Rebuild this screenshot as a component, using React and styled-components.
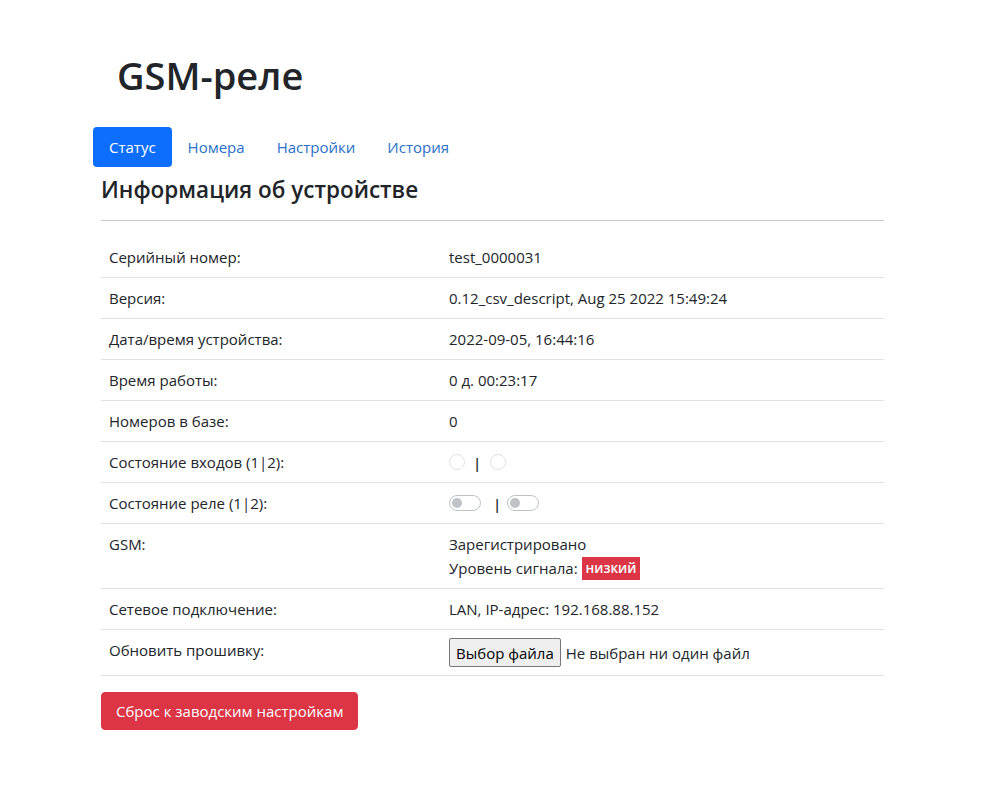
import styled, { createGlobalStyle } from "styled-components";

const GlobalStyle = createGlobalStyle`
  body {
    margin: 0;
    background: #fff;
    color: #212529;
    font-family: "Open Sans", "Noto Sans", sans-serif;
    font-size: 15px;
    line-height: 24px;
  }
  * { box-sizing: border-box; }
`;

const rows = [
  ["Серийный номер:", "test_0000031"],
  ["Версия:", "0.12_csv_descript, Aug 25 2022 15:49:24"],
  ["Дата/время устройства:", "2022-09-05, 16:44:16"],
  ["Время работы:", "0 д. 00:23:17"],
  ["Номеров в базе:", "0"],
];

const App = () => {
  return (
    <Page>
      <GlobalStyle />
      <Title>GSM-реле</Title>
      <Nav>
        <NavLink $active>Статус</NavLink>
        <NavLink>Номера</NavLink>
        <NavLink>Настройки</NavLink>
        <NavLink>История</NavLink>
      </Nav>
      <Content>
        <SectionTitle>Информация об устройстве</SectionTitle>
        <Rule />
        <Table>
          <tbody>
            {rows.map(([k, v]) => (
              <tr key={k}>
                <Cell>{k}</Cell>
                <Cell>{v}</Cell>
              </tr>
            ))}
            <tr>
              <Cell>Состояние входов (1|2):</Cell>
              <Cell>
                <Inline>
                  <Radio />
                  <Sep>|</Sep>
                  <Radio />
                </Inline>
              </Cell>
            </tr>
            <tr>
              <Cell>Состояние реле (1|2):</Cell>
              <Cell>
                <Inline>
                  <Switch />
                  <Sep $wide>|</Sep>
                  <Switch />
                </Inline>
              </Cell>
            </tr>
            <tr>
              <Cell>GSM:</Cell>
              <Cell>
                Зарегистрировано
                <br />
                Уровень сигнала: <Badge>низкий</Badge>
              </Cell>
            </tr>
            <tr>
              <Cell>Сетевое подключение:</Cell>
              <Cell>LAN, IP-адрес: 192.168.88.152</Cell>
            </tr>
            <tr>
              <Cell>Обновить прошивку:</Cell>
              <Cell>
                <FileRow>
                  <FileButton>Выбор файла</FileButton>
                  <span>Не выбран ни один файл</span>
                </FileRow>
              </Cell>
            </tr>
          </tbody>
        </Table>
        <DangerButton>Сброс к заводским настройкам</DangerButton>
      </Content>
    </Page>
  );
};

const Page = styled.div`
  padding: 44px 0 40px 93px;
  width: 884px;
`;

const Title = styled.h1`
  margin: 0 0 21px 24px;
  font-size: 38px;
  font-weight: 600;
  line-height: 62px;
`;

const Nav = styled.nav`
  display: flex;
`;

const NavLink = styled.a`
  padding: 8px 16px;
  border-radius: 4px;
  line-height: 24px;
  color: ${(p) => (p.$active ? "#fff" : "#2a6fc9")};
  background: ${(p) => (p.$active ? "#0d6efd" : "transparent")};
  cursor: pointer;
`;

const Content = styled.div`
  margin-left: 8px;
  width: 783px;
`;

const SectionTitle = styled.h3`
  margin: 7px 0 0;
  font-size: 22.5px;
  font-weight: 600;
  line-height: 32px;
`;

const Rule = styled.hr`
  margin: 14px 0 16px;
  border: 0;
  border-top: 1px solid #c9c9c9;
`;

const Table = styled.table`
  width: 100%;
  border-collapse: collapse;
  margin-bottom: 16px;
`;

const Cell = styled.td`
  padding: 8px;
  border-bottom: 1px solid #dee2e6;
  vertical-align: top;
  &:first-child {
    width: 340px;
  }
`;

const Inline = styled.div`
  display: flex;
  align-items: center;
  height: 24px;
`;

const Sep = styled.span`
  margin: 2px ${(p) => (p.$wide ? "6px" : "9px")} 0 ${(p) => (p.$wide ? "12px" : "8px")};
  color: #212529;
  font-weight: 600;
  line-height: 24px;
`;

const Radio = styled.span`
  width: 16px;
  height: 16px;
  border-radius: 50%;
  border: 1px solid #dfe2e6;
  background: #fff;
`;

const Switch = styled.span`
  position: relative;
  width: 32px;
  height: 16px;
  border-radius: 8px;
  border: 1px solid #bfc3c8;
  &::after {
    content: "";
    position: absolute;
    left: 2px;
    top: 2px;
    width: 10px;
    height: 10px;
    border-radius: 50%;
    background: #bfc3c8;
  }
`;

const Badge = styled.span`
  display: inline-block;
  vertical-align: top;
  margin-top: 1px;
  padding: 0 4px;
  background: #dc3545;
  color: #fff;
  font-size: 13.5px;
  font-weight: 600;
  line-height: 23px;
`;

const FileRow = styled.div`
  display: flex;
  align-items: center;
  gap: 5px;
  height: 29px;
`;

const FileButton = styled.button`
  font: inherit;
  height: 29px;
  padding: 0 6px;
  border: 1px solid #767676;
  border-radius: 2px;
  background: #efefef;
  color: #000;
`;

const DangerButton = styled.button`
  font: inherit;
  color: #fff;
  background: #dc3545;
  border: 1px solid #dc3545;
  border-radius: 4px;
  padding: 6px 14px;
  line-height: 24px;
  cursor: pointer;
`;

export default App;
